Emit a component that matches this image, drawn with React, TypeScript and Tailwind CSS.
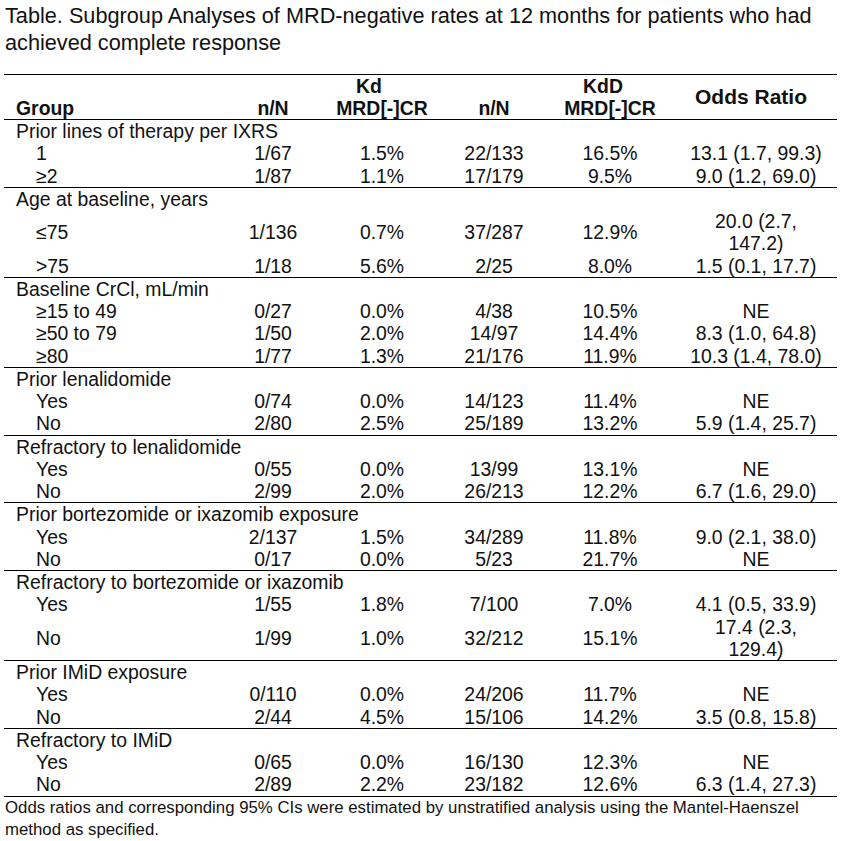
import React from 'react'

type Row = [string, string, string, string, string, string]

interface Group {
  title: string
  rows: Row[]
}

const groups: Group[] = [
  {
    title: 'Prior lines of therapy per IXRS',
    rows: [
      ['1', '1/67', '1.5%', '22/133', '16.5%', '13.1 (1.7, 99.3)'],
      ['≥2', '1/87', '1.1%', '17/179', '9.5%', '9.0 (1.2, 69.0)'],
    ],
  },
  {
    title: 'Age at baseline, years',
    rows: [
      ['≤75', '1/136', '0.7%', '37/287', '12.9%', '20.0 (2.7, 147.2)'],
      ['>75', '1/18', '5.6%', '2/25', '8.0%', '1.5 (0.1, 17.7)'],
    ],
  },
  {
    title: 'Baseline CrCl, mL/min',
    rows: [
      ['≥15 to 49', '0/27', '0.0%', '4/38', '10.5%', 'NE'],
      ['≥50 to 79', '1/50', '2.0%', '14/97', '14.4%', '8.3 (1.0, 64.8)'],
      ['≥80', '1/77', '1.3%', '21/176', '11.9%', '10.3 (1.4, 78.0)'],
    ],
  },
  {
    title: 'Prior lenalidomide',
    rows: [
      ['Yes', '0/74', '0.0%', '14/123', '11.4%', 'NE'],
      ['No', '2/80', '2.5%', '25/189', '13.2%', '5.9 (1.4, 25.7)'],
    ],
  },
  {
    title: 'Refractory to lenalidomide',
    rows: [
      ['Yes', '0/55', '0.0%', '13/99', '13.1%', 'NE'],
      ['No', '2/99', '2.0%', '26/213', '12.2%', '6.7 (1.6, 29.0)'],
    ],
  },
  {
    title: 'Prior bortezomide or ixazomib exposure',
    rows: [
      ['Yes', '2/137', '1.5%', '34/289', '11.8%', '9.0 (2.1, 38.0)'],
      ['No', '0/17', '0.0%', '5/23', '21.7%', 'NE'],
    ],
  },
  {
    title: 'Refractory to bortezomide or ixazomib',
    rows: [
      ['Yes', '1/55', '1.8%', '7/100', '7.0%', '4.1 (0.5, 33.9)'],
      ['No', '1/99', '1.0%', '32/212', '15.1%', '17.4 (2.3, 129.4)'],
    ],
  },
  {
    title: 'Prior IMiD exposure',
    rows: [
      ['Yes', '0/110', '0.0%', '24/206', '11.7%', 'NE'],
      ['No', '2/44', '4.5%', '15/106', '14.2%', '3.5 (0.8, 15.8)'],
    ],
  },
  {
    title: 'Refractory to IMiD',
    rows: [
      ['Yes', '0/65', '0.0%', '16/130', '12.3%', 'NE'],
      ['No', '2/89', '2.2%', '23/182', '12.6%', '6.3 (1.4, 27.3)'],
    ],
  },
]

export default function App() {
  return (
    <div className="min-h-screen bg-white text-[#111] font-['Liberation_Sans',Arial,sans-serif]">
      {/* Titre */}
      <div className="pl-[5px] pt-[2px] text-[21.7px] leading-[27px] w-[830px]">
        Table. Subgroup Analyses of MRD-negative rates at 12 months for patients who had achieved complete response
      </div>

      <table className="mt-[18px] ml-[4px] w-[833px] table-fixed border-collapse text-[19.4px] leading-[22.25px]">
        <colgroup>
          <col className="w-[221px]" />
          <col className="w-[96px]" />
          <col className="w-[122px]" />
          <col className="w-[102px]" />
          <col className="w-[130px]" />
          <col className="w-[162px]" />
        </colgroup>
        <thead>
          <tr className="border-t border-b border-black font-bold leading-[22px]">
            <th className="pl-[12px] text-left align-bottom font-bold">Group</th>
            <th className="text-center align-bottom font-bold">n/N</th>
            <th className="text-center align-bottom font-bold">
              <div className="pr-[26px]">Kd</div>
              <div>MRD[-]CR</div>
            </th>
            <th className="text-center align-bottom font-bold">n/N</th>
            <th className="text-center align-bottom font-bold">
              <div className="pr-[14px]">KdD</div>
              <div>MRD[-]CR</div>
            </th>
            <th className="pr-[10px] text-center align-middle text-[21px] font-bold">Odds Ratio</th>
          </tr>
        </thead>
        <tbody>
          {groups.map((g) => (
            <React.Fragment key={g.title}>
              <tr>
                <td colSpan={6} className="pl-[12px] whitespace-nowrap">{g.title}</td>
              </tr>
              {g.rows.map((r, i) => (
                <tr key={i} className={i === g.rows.length - 1 ? 'border-b border-black' : ''}>
                  <td className="pl-[32px] align-middle whitespace-nowrap">{r[0]}</td>
                  <td className="text-center align-middle">{r[1]}</td>
                  <td className="text-center align-middle">{r[2]}</td>
                  <td className="text-center align-middle">{r[3]}</td>
                  <td className="text-center align-middle">{r[4]}</td>
                  <td className="px-[13px] text-center align-middle">{r[5]}</td>
                </tr>
              ))}
            </React.Fragment>
          ))}
        </tbody>
      </table>

      {/* Note de bas de tableau */}
      <div className="pl-[5px] text-[16.8px] leading-[22px] w-[830px]">
        Odds ratios and corresponding 95% CIs were estimated by unstratified analysis using the Mantel-Haenszel method as specified.
      </div>
    </div>
  )
}
